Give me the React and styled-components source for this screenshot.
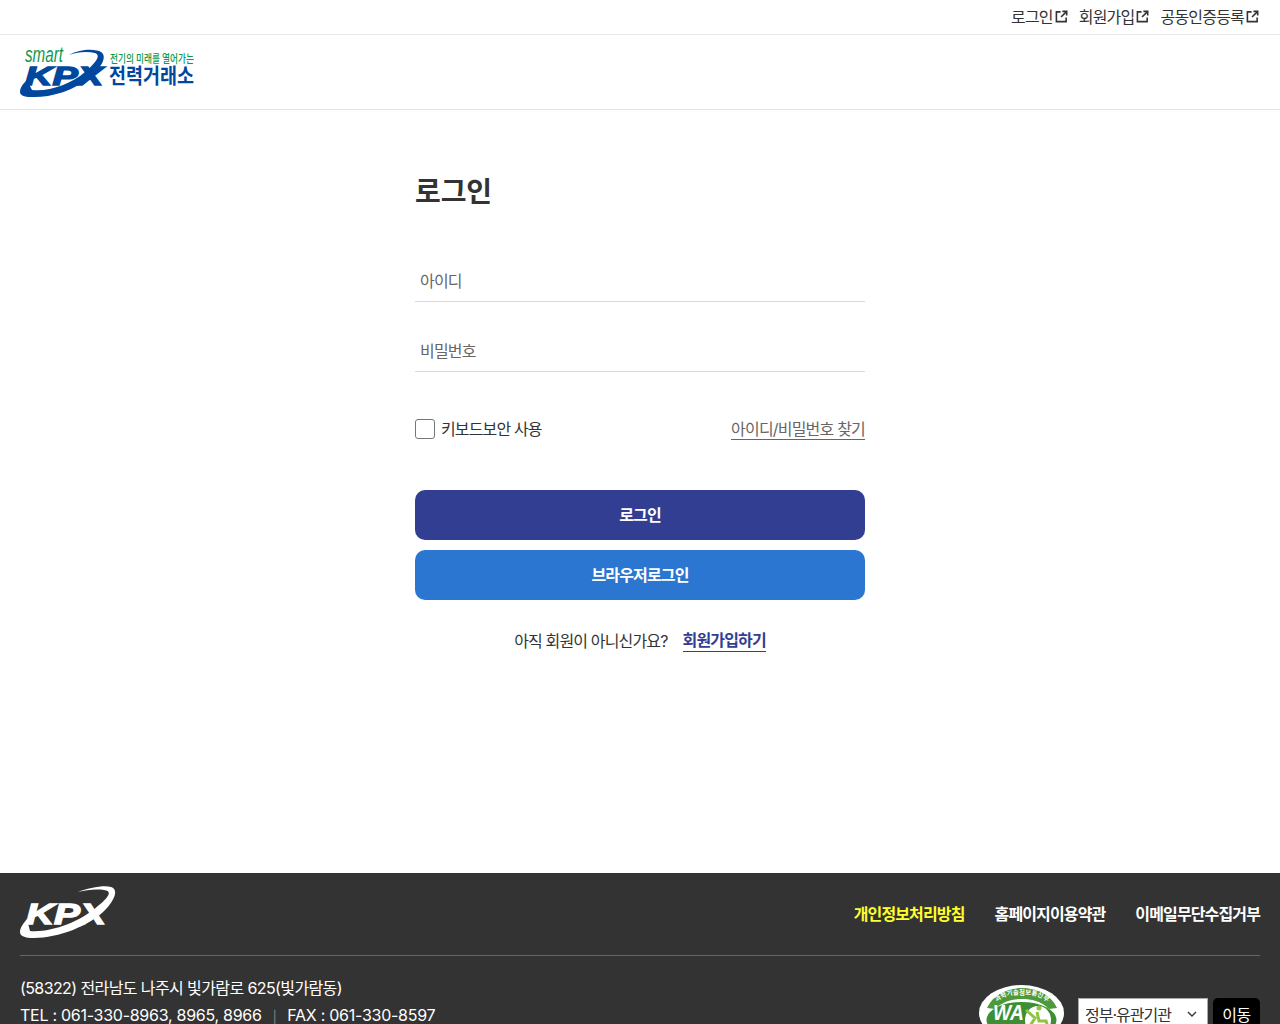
import React from 'react';
import styled, { createGlobalStyle } from 'styled-components';

const GlobalStyle = createGlobalStyle`
* { box-sizing: border-box; }
html, body { margin: 0; padding: 0; background: #fff; overflow: hidden; }
body {
    font-family: Inter, "Noto Sans CJK KR", "Noto Sans", sans-serif;
    color: #333;
}
a { text-decoration: none; color: inherit; }
`

const LinkIcon = () => (
    <svg width="13" height="13" viewBox="0 0 14 14" fill="none" stroke="#333" strokeWidth="1.7">
        <path d="M6 2H1.5V12.5H12V8" />
        <path d="M8 1.5H12.6V6" />
        <path d="M12.4 1.7L6.5 7.6" />
    </svg>
);

const KpxLogo = () => (
    <svg width="176" height="52" viewBox="0 0 176 52">
        <text x="6" y="16" fontFamily="Liberation Sans" fontStyle="italic" fontSize="22" fill="#0f9a4b" textLength="38" lengthAdjust="spacingAndGlyphs">smart</text>
        <path d="M1 46C1 41 5 37 8 34L13 44C30 46 52 38 66 26C78 16 82 9 76 7C68 5 58 6 50 9C62 2 78 3 82 6C88 10 84 20 72 30C55 46 28 52 12 51C5 51 1 49 1 46Z" fill="#00479d" />
        <text x="6" y="39" fontFamily="Liberation Sans" fontWeight="700" fontStyle="italic" fontSize="26" fill="#00479d" stroke="#00479d" strokeWidth="1.4" textLength="78" lengthAdjust="spacingAndGlyphs">KPX</text>
        <text x="91" y="17" fontFamily="Noto Sans CJK KR" fontWeight="500" fontSize="11" fill="#0f9a4b" textLength="84" lengthAdjust="spacingAndGlyphs">전기의 미래를 열어가는</text>
        <text x="90" y="37" fontFamily="Noto Sans CJK KR" fontWeight="700" fontSize="21" fill="#00479d" textLength="85" lengthAdjust="spacingAndGlyphs">전력거래소</text>
    </svg>
);

const FooterLogo = () => (
    <svg width="96" height="54" viewBox="0 0 96 54">
        <path d="M0 46C0 41 4 37 7 33L10 45C30 47 60 36 78 20C90 10 92 5 84 4C76 3 66 4 58 6C68 2 84 -1 91 1C98 3 96 12 86 23C70 40 38 52 14 52C5 52 0 50 0 46Z" fill="#fff" />
        <text x="6" y="38" fontFamily="Liberation Sans" fontWeight="700" fontStyle="italic" fontSize="30" fill="#fff" stroke="#fff" strokeWidth="1.4" textLength="80" lengthAdjust="spacingAndGlyphs">KPX</text>
    </svg>
);

const WaMark = () => (
    <svg width="86" height="58" viewBox="0 0 86 58">
        <ellipse cx="42.5" cy="29" rx="42.5" ry="28" fill="#fff" />
        <path d="M8 24C14 10 30 4 43 4C56 4 72 10 78 24L70 25C62 17 52 15 43 15C34 15 24 17 16 25Z" fill="#4d9a3b" />
        <path id="waArc" d="M14 22C22 12 32 10.5 43 10.5C54 10.5 64 12 72 22" fill="none" />
        <text fontFamily="Noto Sans CJK KR" fontWeight="700" fontSize="6.5" fill="#fff">
            <textPath href="#waArc" startOffset="50%" textAnchor="middle">과학기술정보통신부</textPath>
        </text>
        <ellipse cx="42.5" cy="36" rx="35" ry="18" fill="#3d8f33" />
        <ellipse cx="59" cy="36" rx="13" ry="14" fill="#fff" />
        <text x="14" y="36" fontFamily="Liberation Sans" fontWeight="700" fontStyle="italic" fontSize="22" fill="#fff" textLength="31" lengthAdjust="spacingAndGlyphs">WA</text>
        <circle cx="60" cy="24" r="2.5" fill="#8cc63f" />
        <path d="M47 26L56 34L51 42M58 28L60 37L67 37L69 43M52 40C56 46 64 46 66 42" fill="none" stroke="#8cc63f" strokeWidth="3" />
    </svg>
);

export default function App() {
    return (
        <Page>
            <GlobalStyle />
            <TopBar>
                <TopLink>로그인<LinkIcon /></TopLink>
                <TopLink>회원가입<LinkIcon /></TopLink>
                <TopLink>공동인증등록<LinkIcon /></TopLink>
            </TopBar>
            <Header>
                <KpxLogo />
            </Header>
            <Main>
                <LoginBox>
                    <Title>로그인</Title>
                    <Field placeholder="아이디" />
                    <Field placeholder="비밀번호" type="password" />
                    <OptionRow>
                        <CheckLabel>
                            <CheckBox />
                            <CheckText>키보드보안 사용</CheckText>
                        </CheckLabel>
                        <FindLink>아이디/비밀번호 찾기</FindLink>
                    </OptionRow>
                    <SubmitButton $bg="#323e92">로그인</SubmitButton>
                    <SubmitButton $bg="#2b76d0" $gap="10px">브라우저로그인</SubmitButton>
                    <JoinRow>
                        아직 회원이 아니신가요?
                        <JoinLink>회원가입하기</JoinLink>
                    </JoinRow>
                </LoginBox>
            </Main>
            <Footer>
                <FooterTop>
                    <FooterLogo />
                    <PolicyList>
                        <PolicyLink $active>개인정보처리방침</PolicyLink>
                        <PolicyLink>홈페이지이용약관</PolicyLink>
                        <PolicyLink>이메일무단수집거부</PolicyLink>
                    </PolicyList>
                </FooterTop>
                <FooterBottom>
                    <Address>
                        <AddressLine $spacing="-0.6px">(58322) 전라남도 나주시 빛가람로 625(빛가람동)</AddressLine>
                        <AddressLine $spacing="-0.27px">TEL : 061-330-8963, 8965, 8966<Bar>|</Bar>FAX : 061-330-8597</AddressLine>
                    </Address>
                    <FooterTools>
                        <WaMark />
                        <SiteSelect>
                            정부·유관기관
                            <svg width="10" height="6" viewBox="0 0 10 6" fill="none" stroke="#333" strokeWidth="1.4">
                                <path d="M1 1L5 5L9 1" />
                            </svg>
                        </SiteSelect>
                        <GoButton>이동</GoButton>
                    </FooterTools>
                </FooterBottom>
            </Footer>
        </Page>
    )
}

const Page = styled.div`
width: 100%;
height: 1024px;
overflow: hidden;
`

const TopBar = styled.div`
height: 35px;
display: flex;
justify-content: flex-end;
align-items: center;
gap: 11px;
padding: 0 21px 2px 0;
border-bottom: 1px solid #e8e8e8;
`

const TopLink = styled.a`
display: flex;
align-items: center;
gap: 2px;
font-size: 16px;
letter-spacing: -0.8px;
color: #333;
`

const Header = styled.header`
height: 75px;
display: flex;
align-items: center;
padding-left: 19px;
border-bottom: 1px solid #e4e4e4;
`

const Main = styled.main`
height: 763px;
display: flex;
justify-content: center;
`

const LoginBox = styled.div`
width: 450px;
padding-top: 61px;
display: flex;
flex-direction: column;
`

const Title = styled.h1`
margin: 0 0 48px;
font-size: 28px;
line-height: 42px;
font-weight: 700;
letter-spacing: -0.1px;
color: #333;
`

const Field = styled.input`
height: 41px;
margin-bottom: 29px;
padding: 0 5px;
border: none;
border-bottom: 1px solid #d9d9d9;
outline: none;
font-family: inherit;
font-size: 16px;
letter-spacing: -0.8px;
color: #333;

&::placeholder {
    color: #666;
}
`

const OptionRow = styled.div`
display: flex;
justify-content: space-between;
align-items: center;
margin-top: 16px;
height: 24px;
`

const CheckLabel = styled.label`
display: flex;
align-items: center;
gap: 6px;
font-size: 16px;
letter-spacing: -0.85px;
color: #333;
`

const CheckText = styled.span`
margin-bottom: 2px;
`

const CheckBox = styled.span`
width: 20px;
height: 20px;
border: 1px solid #767676;
border-radius: 3px;
background: #fff;
`

const FindLink = styled.a`
font-size: 16px;
line-height: 20px;
letter-spacing: -0.8px;
color: #666;
border-bottom: 1px solid #666;
`

const SubmitButton = styled.button`
height: 50px;
margin-top: ${props => props.$gap || '49px'};
padding: 0 0 2px;
border: none;
border-radius: 10px;
background: ${props => props.$bg};
color: #fff;
font-family: inherit;
font-size: 16px;
font-weight: 700;
letter-spacing: -0.85px;
`

const JoinRow = styled.div`
display: flex;
justify-content: center;
align-items: center;
gap: 15px;
margin-top: 28px;
font-size: 16px;
letter-spacing: -0.85px;
color: #333;
`

const JoinLink = styled.a`
color: #323e92;
font-weight: 600;
line-height: 22px;
border-bottom: 1px solid #323e92;
`

const Footer = styled.footer`
background: #333;
padding: 0 20px;
height: 151px;
color: #fff;
`

const FooterTop = styled.div`
height: 83px;
padding-bottom: 2px;
display: flex;
justify-content: space-between;
align-items: center;
border-bottom: 1px solid #666;
`

const PolicyList = styled.div`
display: flex;
gap: 30px;
`

const PolicyLink = styled.a`
font-size: 16px;
font-weight: 700;
letter-spacing: -0.87px;
color: ${props => props.$active ? '#ffff2e' : '#fff'};
`

const FooterBottom = styled.div`
display: flex;
justify-content: space-between;
padding-top: 19px;
`

const Address = styled.div`
display: flex;
flex-direction: column;
`

const AddressLine = styled.p`
margin: 0;
font-size: 16px;
line-height: 27px;
letter-spacing: ${props => props.$spacing};
`

const Bar = styled.span`
margin: 0 11px;
font-size: 12px;
color: #888;
`

const FooterTools = styled.div`
display: flex;
align-items: flex-start;
gap: 5px;
padding-top: 9px;
`

const SiteSelect = styled.div`
width: 130px;
height: 32px;
margin: 14px 0 0 8px;
padding: 0 10px 0 6px;
display: flex;
justify-content: space-between;
align-items: center;
background: #fff;
border: 1px solid #aaa;
font-size: 16px;
letter-spacing: -1px;
color: #333;
`

const GoButton = styled.button`
width: 47px;
height: 32px;
margin-top: 14px;
border: none;
border-radius: 5px;
background: #000;
color: #fff;
font-family: inherit;
font-size: 16px;
letter-spacing: -0.5px;
`
